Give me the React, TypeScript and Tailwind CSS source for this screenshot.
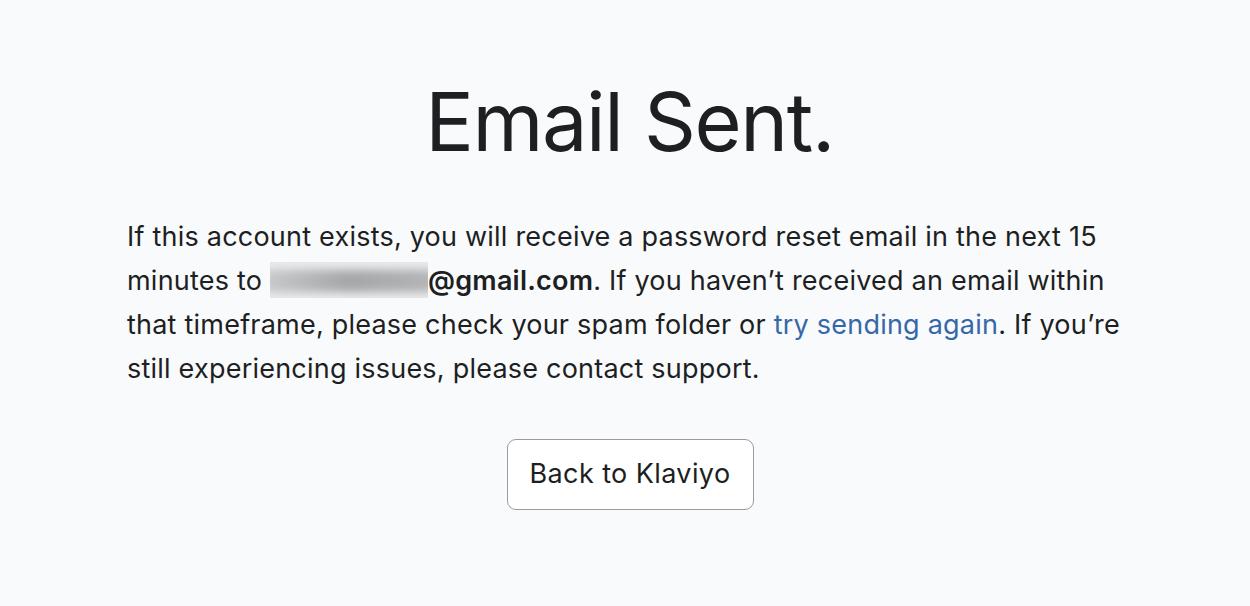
export default function App() {
  return (
    <div
      className="min-h-screen w-full bg-[#f9fafc] pl-[4px] text-[#1d1f22]"
      style={{ fontFamily: "Inter, 'Noto Sans', sans-serif" }}
    >
      <div className="mx-auto flex w-[1000px] flex-col items-center pt-[76px]">
        <h1 className="pl-[5px] text-[81px] font-normal leading-[92px] tracking-[-1.4px]">Email Sent.</h1>

        <p className="mt-[47px] w-full text-[27px] leading-[44px] tracking-[0.22px]">
          If this account exists, you will receive a password reset email in the next 15 minutes to{" "}
          <span className="relative inline-block h-[36px] w-[158px] overflow-hidden align-[-8px] bg-[#e9eaec]">
            <span className="absolute inset-x-[-6px] top-[8px] h-[22px] bg-gradient-to-r from-[#c9cacc] via-[#a5a6a8] to-[#b4b5b7] blur-[4px]" />
          </span>
          <span className="font-semibold">@gmail.com</span>. If you haven’t received an email within
          that timeframe, please check your spam folder or{" "}
          <a href="#" className="text-[#3568a9]">
            try sending again
          </a>
          . If you’re still experiencing issues, please contact support.
        </p>

        <button className="ml-[6px] mt-[48px] h-[71px] w-[247px] rounded-[9px] border border-[#9a9b9e] bg-white text-[27px] tracking-[0.4px] text-[#1d1f22]">
          Back to Klaviyo
        </button>
      </div>
    </div>
  );
}
